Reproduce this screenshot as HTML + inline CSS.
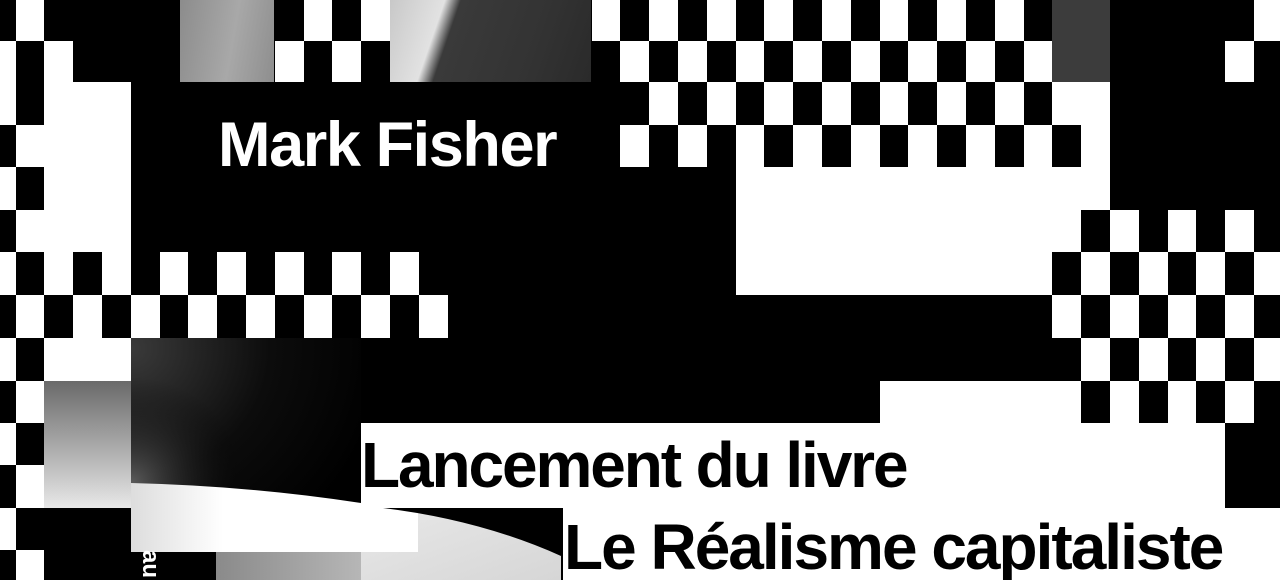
<!DOCTYPE html>
<html><head><meta charset="utf-8">
<style>
html,body{margin:0;padding:0;background:#000;}
#c{position:relative;width:1280px;height:580px;overflow:hidden;background:#000;}
.w{position:absolute;background:#fff;}
.a{position:absolute;}
.t{position:absolute;font-family:"Liberation Sans",Arial,sans-serif;font-weight:bold;white-space:nowrap;line-height:1;}
</style></head><body>
<div id="c"></div>
<template id="ov">
<div class="a" style="left:180px;top:0;width:94px;height:82px;background:linear-gradient(100deg,#8c8c8c,#a8a8a8 55%,#8e8e8e)"></div>
<div class="a" style="left:390px;top:0;width:201px;height:82px;background:linear-gradient(109deg,#c8c8c8 0%,#e2e2e2 24%,#3a3a3a 31%,#333 70%,#2a2a2a 100%)"></div>
<div class="a" style="left:1052px;top:0;width:58px;height:82px;background:#3c3c3c"></div>
<div class="a" style="left:44px;top:381px;width:87px;height:127px;background:linear-gradient(to bottom,#6a6a6a,#a8a8a8 50%,#e8e8e8)"></div>
<svg class="a" style="left:131px;top:338px" width="230" height="214">
<defs>
<radialGradient id="g1" cx="0" cy="0.05" r="1.1"><stop offset="0" stop-color="#3a3a3a"/><stop offset="0.55" stop-color="#0c0c0c"/><stop offset="1" stop-color="#000"/></radialGradient>
<radialGradient id="g2" cx="0" cy="0.68" r="0.5"><stop offset="0" stop-color="#666" stop-opacity="0.9"/><stop offset="1" stop-color="#000" stop-opacity="0"/></radialGradient>
<linearGradient id="g3" x1="0" y1="0" x2="1" y2="0"><stop offset="0" stop-color="#ddd"/><stop offset="0.4" stop-color="#fff"/></linearGradient>
</defs>
<rect width="230" height="214" fill="url(#g1)"/>
<rect width="230" height="214" fill="url(#g2)"/>
<path d="M0 145 Q120 148 230 165 L230 214 L0 214 Z" fill="url(#g3)"/>
</svg>
<div class="a" style="left:216px;top:552px;width:203px;height:28px;background:linear-gradient(90deg,#8a8a8a,#c8c8c8)"></div>
<svg class="a" style="left:361px;top:508px" width="200" height="72">
<defs><linearGradient id="g4" x1="0" y1="0" x2="1" y2="1"><stop offset="0" stop-color="#e8e8e8"/><stop offset="1" stop-color="#d6d6d6"/></linearGradient></defs>
<rect width="200" height="72" fill="url(#g4)"/>
<rect width="57" height="44" fill="#fff"/>
<path d="M22 0 Q120 12 200 48 L200 0 Z" fill="#000"/>
</svg>
<div class="t" style="left:218px;top:114px;font-size:63px;color:#fff;letter-spacing:-1.4px">Mark Fisher</div>
<div class="t" style="left:361px;top:433px;font-size:64px;color:#000;letter-spacing:-2.1px">Lancement du livre</div>
<div class="t" style="left:564px;top:515px;font-size:64px;color:#000;letter-spacing:-2px">Le Réalisme capitaliste</div>
<div class="t" style="left:138px;top:550px;font-size:24px;color:#fff;writing-mode:vertical-rl;">au</div>
</template>
<script>
var rows=[
"BWBBBB"+"BBBB"+"BWBW"+"BBBBBBB"+"W"+"BWBWBWBWBWBWBWB"+"BBBBBBB"+"W",
"WBWBBB"+"BBBB"+"WBWB"+"BBBBBBB"+"B"+"WBWBWBWBWBWBWBW"+"BBBBBBW"+"B",
"WBWWWB"+"BBBB"+"BBBB"+"BBBBBBB"+"B"+"B"+"WBWBWBWBWBWBWB"+"WW"+"BBBBBB",
"BWWWWB"+"BBBB"+"BBBB"+"BBBBBBB"+"B"+"WBWBWBWBWBWBWBWBW"+"BBBBBB",
"WBWWWB"+"BBBBBBBBBBBBBBB"+"BBBBB"+"WWWWWWWWWWWWW"+"BBBBBB",
"BWWWWB"+"BBBBBBBBBBBBBBBBBBBB"+"WWWWWWWWWWWW"+"BWBWBWB",
"WBWBWB"+"WBWBWBWBW"+"BBBBBBBBBBB"+"WWWWWWWWWWW"+"BWBWBWBW",
"BWBWBW"+"BWBWBWBWBW"+"BBBBBBBBBBBBBBBBBBBBB"+"WBWBWBWB",
"WBWWWB"+"BBBBBBBBBBBBBBBBBBBBBBBBBBBBBBBB"+"WBWBWBW",
"BWWWWB"+"BBBBBBBBBBBBBBBBBBBBBBBBB"+"WWWWWWW"+"BWBWBWB",
"WBWWWB"+"BBBBBBB"+"WWWWWWWWWWWWWWWWWWWWWWWWWWWWWW"+"BB",
"BWWWWB"+"BBBBBBB"+"WWWWWWWWWWWWWWWWWWWWWWWWWWWWWW"+"BB",
"WBBBBB"+"BBBBBBBBBBBBBB"+"WWWWWWWWWWWWWWWWWWWWWWWWW",
"BWBBBB"+"BBBBBBBBBBBBBB"+"WWWWWWWWWWWWWWWWWWWWWWWWW"];
var Y=[0,41,82,125,167,210,252,295,338,381,423,465,508,550,580];
var c=document.getElementById('c'),h='';
function X(k){return 15.5+28.8*k;}
for(var r=0;r<rows.length;r++){for(var i=0;i<45;i++){if(rows[r][i]=='W'){var x0=Math.round(X(i-1)),x1=Math.round(X(i));
h+='<div class="w" style="left:'+x0+'px;top:'+Y[r]+'px;width:'+(x1-x0)+'px;height:'+(Y[r+1]-Y[r])+'px"></div>';}}}
c.innerHTML=h+document.getElementById('ov').innerHTML;
</script>
</body></html>
